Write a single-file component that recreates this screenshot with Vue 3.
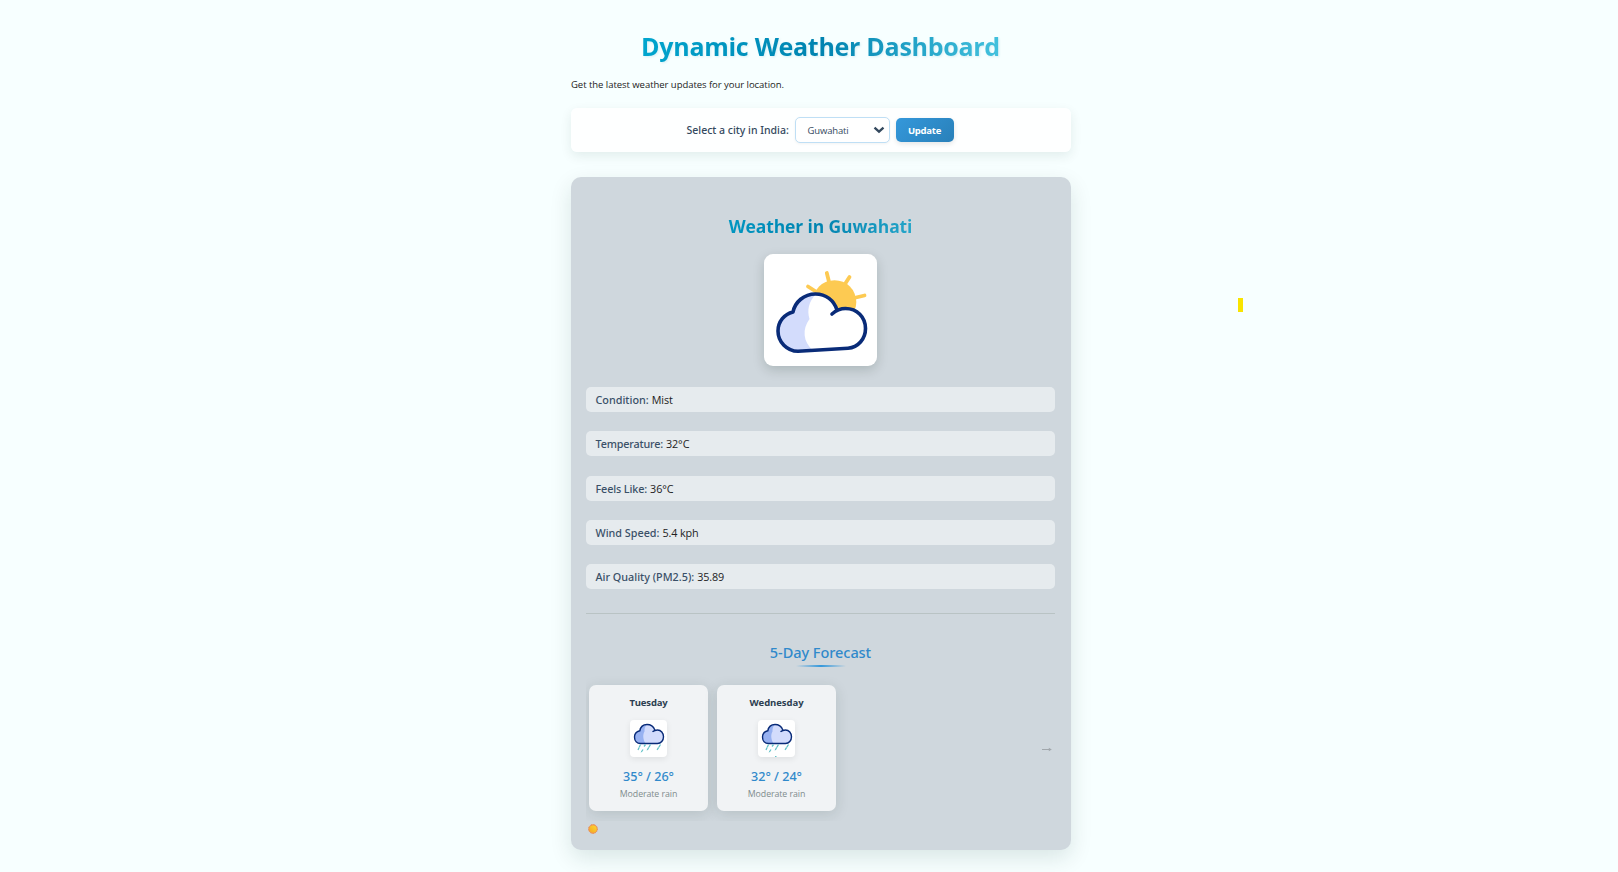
<script setup>
import { ref } from 'vue'

const city = ref('Guwahati')
const details = [
  { label: 'Condition:', value: 'Mist', cls: 'condition' },
  { label: 'Temperature:', value: '32°C', cls: 'temperature' },
  { label: 'Feels Like:', value: '36°C', cls: 'feels' },
  { label: 'Wind Speed:', value: '5.4 kph', cls: 'wind' },
  { label: 'Air Quality (PM2.5):', value: '35.89', cls: 'air' }
]
const forecast = [
  { day: 'Tuesday', temps: '35° / 26°', text: 'Moderate rain' },
  { day: 'Wednesday', temps: '32° / 24°', text: 'Moderate rain' }
]
</script>

<template>
  <main class="page">
    <div class="container">
      <h1 class="title"><span>Dynamic Weather Dashboard</span></h1>
      <p class="subtitle">Get the latest weather updates for your location.</p>

      <form class="picker" @submit.prevent>
        <label class="picker-label">Select a city in India:</label>
        <div class="select">
          <span>{{ city }}</span>
          <svg width="12" height="8" viewBox="0 0 12 8"><path d="M1.5 1.6 6 5.6 10.5 1.6" fill="none" stroke="#34495e" stroke-width="2.3" /></svg>
        </div>
        <button class="update">Update</button>
      </form>

      <section class="card">
        <h2 class="card-title">Weather in {{ city }}</h2>
        <div class="hero">
          <svg width="113" height="112" viewBox="0 0 113 112">
            <g stroke="#fdca52" stroke-width="3.8" stroke-linecap="round">
              <path d="M44 32.500 51 37M62.800 19 64.800 27M85.500 23 81 30M92 43.500 100.500 41.500" />
            </g>
            <circle cx="70.500" cy="48" r="21.800" fill="#fdca52" />
            <path d="M34 97.300 84 94.300C94 93.500 101.500 85 101.500 74.500C101.500 63 93 54.500 81.500 54.500C78.500 54.500 76 55 73 56C70 46.500 62 40 51.500 40C40 40 31 48 29 58C20.500 60 14 67.500 14 77C14 88 23 97.300 34 97.300Z" fill="#fff" />
            <path d="M52 40C44.500 48 43 56 45.500 65C38 75 39 88 49 96.400L34 97.300C23 97.300 14 88 14 77C14 67.500 20.500 60 29 58C31 48 40 40 52 40Z" fill="#d3dcfc" />
            <path d="M68 60C72 56.500 76.500 54.500 81.500 54.500C93 54.500 101.500 63 101.500 74.500C101.500 85 94 93.500 84 94.300L34 97.300C23 97.300 14 88 14 77C14 67.500 20.500 60 29 58C31 48 40 40 51.500 40C62 40 70 46.500 73 56" fill="none" stroke="#092b78" stroke-width="3.6" stroke-linecap="round" stroke-linejoin="round" />
          </svg>
        </div>

        <div class="details">
          <p v-for="d in details" :key="d.label" class="detail" :class="d.cls">
            <strong>{{ d.label }}</strong><span>{{ d.value }}</span>
          </p>
        </div>

        <div class="forecast">
          <h3 class="forecast-title">5-Day Forecast</h3>
          <div class="days">
            <article v-for="f in forecast" :key="f.day" class="day">
              <h4 :class="f.day.toLowerCase()">{{ f.day }}</h4>
              <svg class="day-icon" viewBox="0 0 37 37">
                <path d="M10.500 23.500H27.500C31 23.500 33.500 20.500 33.500 16.800C33.500 13 31 10.200 27.500 10.200H24.800C23.500 6.500 20.500 4.500 17 4.500C13 4.500 10.500 7 9.800 10.800C6.800 11.500 4.500 13.800 4.500 17C4.500 21 7 23.500 10.500 23.500Z" fill="#d3dcfc" />
                <path d="M17 4.500C14.500 7 14.500 9 14.500 11.500C12.500 15 13 19.500 15.500 23.500H10.500C7 23.500 4.500 21 4.500 17C4.500 13.800 6.800 11.500 9.800 10.800C10.500 7 13 4.500 17 4.500Z" fill="#97b1f1" />
                <path d="M22.500 11.800C24 10.500 25.500 10 27.500 10C31 10 33.500 13 33.500 16.800C33.500 20.500 31 23.500 27.500 23.500H10.500C7 23.500 4.500 21 4.500 17C4.500 13.800 6.800 11.500 9.800 10.800C10.500 7 13 4.500 17 4.500C20.500 4.500 23.500 6.500 24.800 10" fill="none" stroke="#092b78" stroke-width="1.4" />
                <path d="M10.500 24.500 8 30M15.500 24.500 14 26.500M13 29.500 11 32.500M20.500 24.500 17 30.500M30.500 24.500 27 30" fill="none" stroke="#65c3c8" stroke-width="1.3" stroke-dasharray="3 .4" />
                <path v-if="f.day === 'Wednesday'" d="M17 36.500h1.500" stroke="#65c3c8" />
              </svg>
              <p class="temps">{{ f.temps }}</p>
              <p class="desc">{{ f.text }}</p>
            </article>
            <svg class="arrow" width="10" height="5" viewBox="0 0 10 5"><path d="M0 2.500H8" stroke="#a1a7ac" /><path d="M6.800.8 9.800 2.500 6.800 4.200Z" fill="#a1a7ac" /></svg>
          </div>
        </div>

        <svg class="sun" width="10" height="10" viewBox="0 0 10 10">
          <defs><linearGradient id="sunFill" x1="1" y1="0" x2="0" y2="1"><stop offset="0" stop-color="#fdd82f" /><stop offset="1" stop-color="#f5a623" /></linearGradient></defs>
          <circle cx="5" cy="5" r="4.400" fill="#f0a04e" stroke="#ec7f45" stroke-dasharray="1.2 .6" />
          <circle cx="5" cy="5" r="3.600" fill="url(#sunFill)" />
        </svg>
      </section>
    </div>
    <div class="marker"></div>
  </main>
</template>

<style>
body { background: #f7ffff; overflow: hidden; }
</style>

<style scoped>
* { box-sizing: border-box; }
h1, h2, h3, h4, p { margin: 0; }
.page { position: relative; height: 872px; overflow: hidden; background: #f7ffff; color: #222; font-family: "Open Sans", "Noto Sans", sans-serif; }
.container { width: 500px; margin-left: 571px; padding-top: 27px; }
.title, .card-title { background: linear-gradient(100deg, #00b4db, #0083b0 50%, #5fdbf0); -webkit-background-clip: text; background-clip: text; color: transparent; text-align: center; }
.title { height: 40px; padding-right: 1px; line-height: 38px; font-size: 25px; font-weight: 700; letter-spacing: -.28px; filter: drop-shadow(1px 1px 1px rgba(0, 131, 176, .12)); }
.subtitle { height: 20px; margin-top: 7px; font-size: 9.5px; line-height: 21px; letter-spacing: -.04px; }
.picker { display: flex; align-items: center; justify-content: center; gap: 6px; height: 44px; margin-top: 14px; padding-right: 2px; border-radius: 6px; background: rgba(255, 255, 255, .85); box-shadow: 0 4px 12px rgba(0, 50, 40, .09); }
.picker-label { width: 102px; color: #34495e; font-family: "Noto Sans", sans-serif; font-size: 10.5px; line-height: 16px; margin-top: -1px; font-weight: 500; white-space: nowrap; }
.select { display: flex; align-items: center; justify-content: space-between; width: 95px; height: 26px; padding: 0 4px 0 12px; border: 1px solid #bfdff5; border-radius: 5px; background: #fff; box-shadow: 0 1px 3px rgba(0, 0, 0, .05); color: #34495e; font-size: 9.5px; letter-spacing: -.15px; }
.update { width: 58px; height: 24px; padding: 0; border: 0; border-radius: 5px; background: linear-gradient(135deg, #3498db, #2980b9); box-shadow: 0 2px 5px rgba(0, 0, 0, .1); color: #fff; font: 700 9.5px "Open Sans", sans-serif; letter-spacing: -.25px; }
.card { height: 673px; margin-top: 25px; padding: 34px 16px 0 15px; border-radius: 10px; background: #cfd7dd; box-shadow: 0 8px 22px rgba(0, 50, 40, .12); }
.card-title { height: 30px; font-size: 17.5px; line-height: 30px; font-weight: 700; letter-spacing: -.12px; }
.hero { width: 113px; height: 112px; margin: 13px 0 0 178px; border-radius: 9px; background: #fff; box-shadow: 0 4px 12px rgba(0, 30, 20, .17); }
.hero svg { display: block; }
.details { display: grid; gap: 19.25px; margin-top: 21px; }
.detail { display: flex; align-items: center; gap: 3px; height: 25px; padding: 0 9.5px; border-radius: 5px; background: #e6ebee; color: #222; font-size: 10.8px; letter-spacing: -.12px; }
.detail strong { color: #3a5068; font-family: "Noto Sans", sans-serif; font-weight: 500; letter-spacing: 0; }
.temperature strong { letter-spacing: -.17px; }
.feels strong { letter-spacing: -.12px; }
.forecast { margin-top: 24px; border-top: 1px solid #b9c3c4; padding-top: 28px; }
.forecast-title { position: relative; height: 25px; text-align: center; color: #3089cb; font-family: "Noto Sans", sans-serif; font-size: 14.5px; line-height: 20px; font-weight: 500; letter-spacing: -.05px; }
.forecast-title::after { content: ""; position: absolute; left: 50%; bottom: 0; width: 50px; height: 2px; transform: translateX(-50%); background: linear-gradient(90deg, transparent, #3498db, transparent); }
.days { display: flex; gap: 9px; height: 149px; margin-top: 5px; padding: 13px 3px 10px; overflow: hidden; }
.day { display: flex; flex-direction: column; align-items: center; width: 119px; height: 126px; padding-top: 8px; border-radius: 7px; background: #f1f3f5; box-shadow: 0 3px 14px rgba(20, 50, 40, .13); }
.day h4 { height: 20px; color: #2c3e50; font-size: 9.5px; line-height: 19px; font-weight: 700; letter-spacing: -.15px; }
.day h4.wednesday { letter-spacing: -.05px; }
.day-icon { display: block; width: 37px; height: 37px; margin-top: 7px; border-radius: 4px; background: #fff; box-shadow: 0 2px 6px rgba(0, 0, 0, .08); }
.temps { height: 20px; margin-top: 10px; color: #3089cb; font-family: "Noto Sans", sans-serif; font-size: 12.6px; line-height: 20px; font-weight: 500; }
.desc { height: 14px; color: #7f8c8d; font-size: 8.8px; line-height: 14px; letter-spacing: -.08px; }
.arrow { align-self: center; margin: 2px 0 0 auto; }
.sun { display: block; margin: 3px 0 0 2px; }
.marker { position: absolute; left: 1238px; top: 298px; width: 5px; height: 14px; background: #f9e400; }
</style>
